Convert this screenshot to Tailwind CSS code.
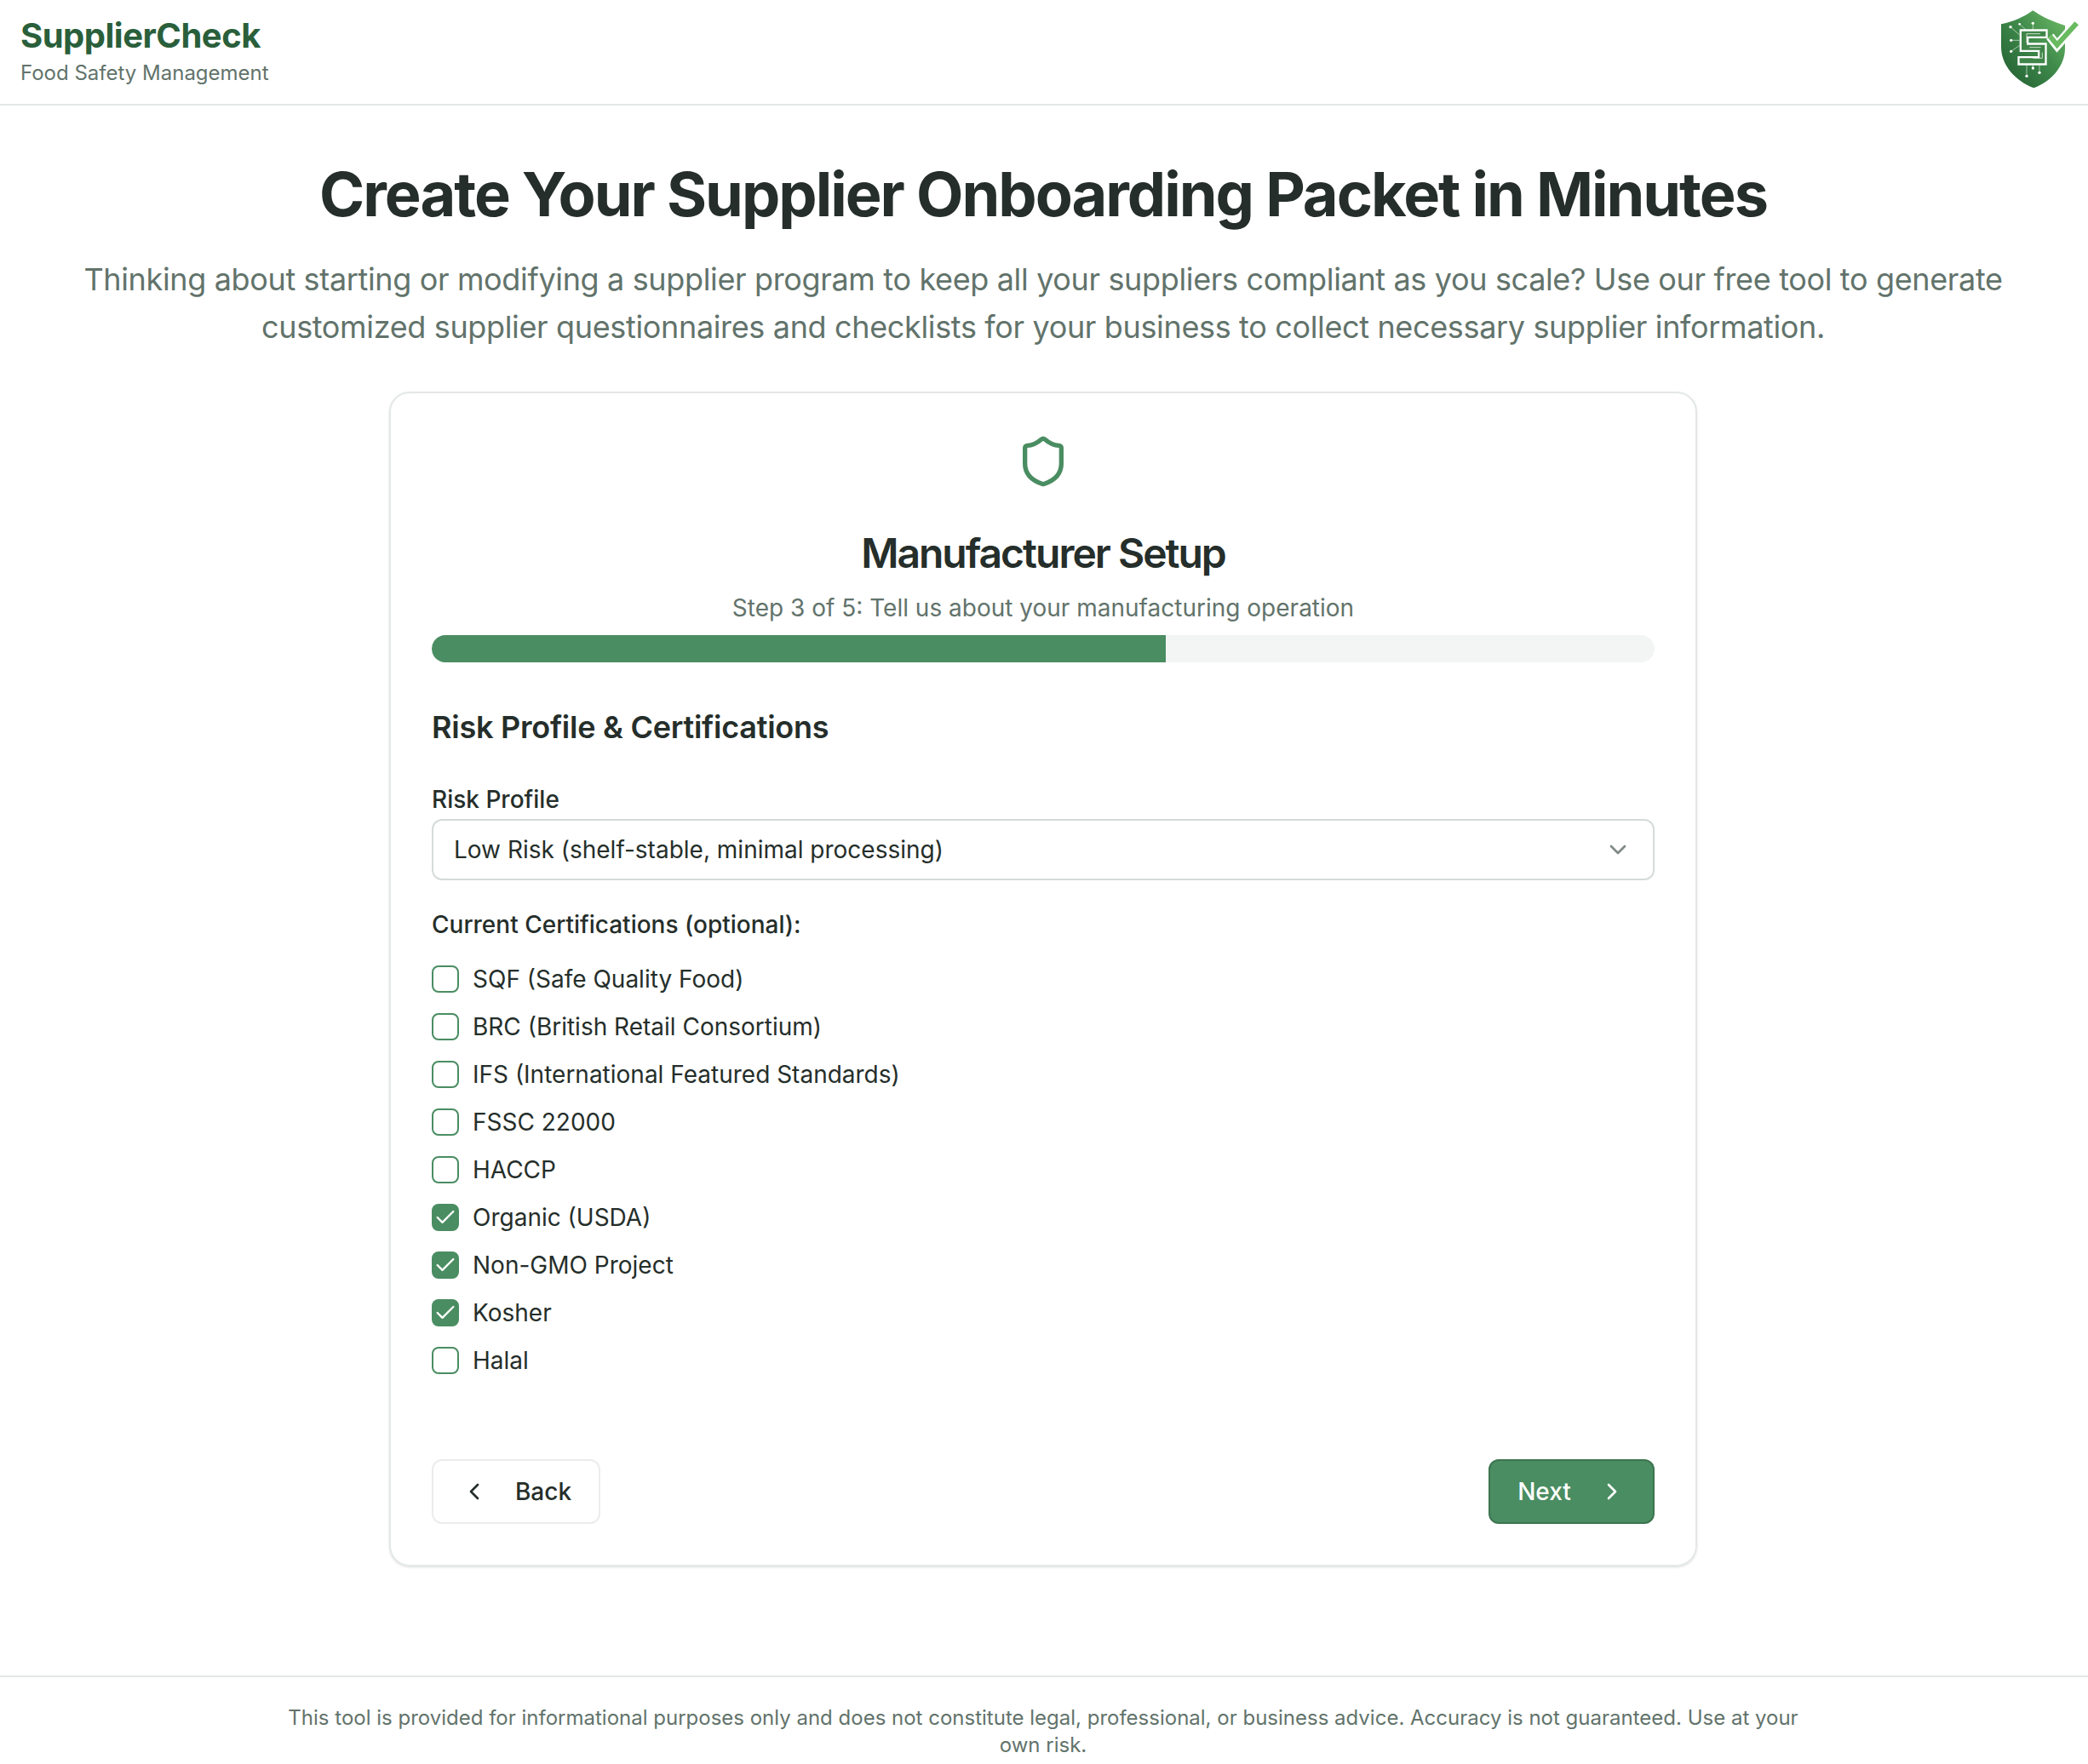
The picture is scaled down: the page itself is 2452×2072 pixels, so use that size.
<!DOCTYPE html>
<html lang="en">
<head>
    <meta charset="UTF-8">
    <meta name="viewport" content="width=device-width, initial-scale=1.0">
    <title>SupplierCheck</title>
    <script src="https://cdn.jsdelivr.net/npm/@tailwindcss/browser@4"></script>
</head>
<body class="bg-white font-['Inter',sans-serif] text-[#252e2a]">
    <!-- Header -->
    <header class="h-[124px] border-b-2 border-[#e3e8e6] pl-6 pr-2 flex items-center justify-between">
        <div class="pb-[6px]">
            <div class="text-[40px] leading-[56px] font-bold tracking-[-0.5px] text-[#2a5f3b]">SupplierCheck</div>
            <div class="text-[24px] leading-[32px] text-[#62736b]">Food Safety Management</div>
        </div>
        <svg class="w-[100px] h-[100px]" viewBox="132 33 300 300" fill="none">
            <defs>
                <linearGradient id="shieldFill" x1="0" y1="1" x2="1" y2="0">
                    <stop offset="0" stop-color="#1f5a30"/>
                    <stop offset="0.55" stop-color="#3f8a4b"/>
                    <stop offset="1" stop-color="#70bd66"/>
                </linearGradient>
            </defs>
            <path d="M262 37C230 60 190 78 150 85L150 165C150 230 200 285 265 310C330 285 375 230 375 170L375 90C335 78 295 60 262 37Z" fill="url(#shieldFill)"/>
            <!-- circuit traces -->
            <g stroke="#dfeee0" stroke-width="2">
                <path d="M183 95L215 123M215 85L245 112M262 82V105M185 142H215M185 181L215 160M240 268V228M262 240V228M285 256V228"/>
            </g>
            <g fill="#ffffff">
                <circle cx="183" cy="95" r="5"/><circle cx="215" cy="85" r="4"/><circle cx="262" cy="82" r="5"/>
                <circle cx="185" cy="142" r="5"/><circle cx="185" cy="181" r="5"/><circle cx="240" cy="268" r="5"/>
                <circle cx="262" cy="240" r="5"/><circle cx="285" cy="256" r="5"/>
            </g>
            <!-- S mark -->
            <path d="M298 119H231V167H295V214H224" stroke="#ffffff" stroke-width="32" stroke-linecap="square"/>
            <path d="M298 119H231V167H295V214H224" stroke="#3f8549" stroke-width="18" stroke-linecap="square"/>
            <path d="M288 119H240V150M250 167H290M295 185V205H262" stroke="#e6f2e6" stroke-width="2.5"/>
            <!-- check -->
            <path d="M322 128L347 160L410 88" stroke="#ffffff" stroke-width="32"/>
            <path d="M322 128L347 158L416 82" stroke="#69ba60" stroke-width="18"/>
        </svg>
    </header>

    <main class="flex flex-col items-center pr-[2px]">
        <h1 class="mt-[56px] text-[72px] leading-[96px] font-bold tracking-[-2px] text-center">Create Your Supplier Onboarding Packet in Minutes</h1>
        <p class="mt-[24px] w-[2300px] text-[36px] leading-[56px] tracking-[-0.35px] text-center text-[#62736b]">Thinking about starting or modifying a supplier program to keep all your suppliers compliant as you scale? Use our free tool to generate customized supplier questionnaires and checklists for your business to collect necessary supplier information.</p>

        <!-- Wizard card -->
        <section class="mt-[48px] w-[1536px] border-2 border-[#e3e8e6] rounded-3xl shadow-sm p-[48px]">
            <svg class="mx-auto w-[64px] h-[64px] text-[#4a8d62]" viewBox="0 0 24 24" fill="none" stroke="currentColor" stroke-width="2" stroke-linecap="round" stroke-linejoin="round">
                <path d="M20 13c0 5-3.5 7.5-7.66 8.95a1 1 0 0 1-.67-.01C7.5 20.5 4 18 4 13V6a1 1 0 0 1 1-1c2 0 4.5-1.2 6.24-2.72a1.17 1.17 0 0 1 1.52 0C14.51 3.81 17 5 19 5a1 1 0 0 1 1 1z"/>
            </svg>
            <h2 class="mt-[48px] text-[48px] leading-[56px] font-semibold tracking-[-2px] text-center">Manufacturer Setup</h2>
            <p class="mt-[16px] text-[28px] leading-[40px] text-center text-[#62736b]">Step 3 of 5: Tell us about your manufacturing operation</p>

            <div class="mt-[12px] h-[32px] rounded-full bg-[#f3f5f4] overflow-hidden">
                <div class="h-full bg-[#4a8d62]" style="width: 60%"></div>
            </div>

            <h3 class="mt-[48px] text-[36px] leading-[56px] font-semibold tracking-[-0.25px]">Risk Profile &amp; Certifications</h3>

            <label class="block mt-[37px] text-[28px] leading-[40px] font-medium">Risk Profile</label>
            <div class="mt-[3px] h-[72px] border-2 border-[#d5dbd8] rounded-xl pl-[24px] pr-[25px] flex items-center justify-between text-[28px]">
                <span>Low Risk (shelf-stable, minimal processing)</span>
                <svg class="w-[32px] h-[32px] text-[#7f8a85]" viewBox="0 0 24 24" fill="none" stroke="currentColor" stroke-width="2" stroke-linecap="round" stroke-linejoin="round"><path d="m6 9 6 6 6-6"/></svg>
            </div>

            <div class="mt-[32px] text-[28px] leading-[40px] font-medium">Current Certifications (optional):</div>
            <ul class="mt-[24px] flex flex-col gap-[16px] text-[28px] leading-[40px]">
                <li class="flex items-center gap-[16px]"><span class="w-[32px] h-[32px] border-2 border-[#4a8d62] rounded-lg"></span>SQF (Safe Quality Food)</li>
                <li class="flex items-center gap-[16px]"><span class="w-[32px] h-[32px] border-2 border-[#4a8d62] rounded-lg"></span>BRC (British Retail Consortium)</li>
                <li class="flex items-center gap-[16px]"><span class="w-[32px] h-[32px] border-2 border-[#4a8d62] rounded-lg"></span>IFS (International Featured Standards)</li>
                <li class="flex items-center gap-[16px]"><span class="w-[32px] h-[32px] border-2 border-[#4a8d62] rounded-lg"></span>FSSC 22000</li>
                <li class="flex items-center gap-[16px]"><span class="w-[32px] h-[32px] border-2 border-[#4a8d62] rounded-lg"></span>HACCP</li>
                <li class="flex items-center gap-[16px]"><span class="w-[32px] h-[32px] bg-[#4a8d62] rounded-lg flex items-center justify-center"><svg class="w-[28px] h-[28px] text-white" viewBox="0 0 24 24" fill="none" stroke="currentColor" stroke-width="2" stroke-linecap="round" stroke-linejoin="round"><path d="M20 6 9 17l-5-5"/></svg></span>Organic (USDA)</li>
                <li class="flex items-center gap-[16px]"><span class="w-[32px] h-[32px] bg-[#4a8d62] rounded-lg flex items-center justify-center"><svg class="w-[28px] h-[28px] text-white" viewBox="0 0 24 24" fill="none" stroke="currentColor" stroke-width="2" stroke-linecap="round" stroke-linejoin="round"><path d="M20 6 9 17l-5-5"/></svg></span>Non-GMO Project</li>
                <li class="flex items-center gap-[16px]"><span class="w-[32px] h-[32px] bg-[#4a8d62] rounded-lg flex items-center justify-center"><svg class="w-[28px] h-[28px] text-white" viewBox="0 0 24 24" fill="none" stroke="currentColor" stroke-width="2" stroke-linecap="round" stroke-linejoin="round"><path d="M20 6 9 17l-5-5"/></svg></span>Kosher</li>
                <li class="flex items-center gap-[16px]"><span class="w-[32px] h-[32px] border-2 border-[#4a8d62] rounded-lg"></span>Halal</li>
            </ul>

            <div class="mt-[96px] flex justify-between text-[28px] font-medium">
                <button class="w-[198px] h-[76px] border-2 border-[#ececec] rounded-xl flex items-center justify-center gap-[32px]">
                    <svg class="w-[32px] h-[32px]" viewBox="0 0 24 24" fill="none" stroke="currentColor" stroke-width="2" stroke-linecap="round" stroke-linejoin="round"><path d="m15 18-6-6 6-6"/></svg>
                    Back
                </button>
                <button class="w-[195px] h-[76px] border-2 border-[#3d7550] bg-[#4a8d62] text-white rounded-xl flex items-center justify-center gap-[32px]">
                    Next
                    <svg class="w-[32px] h-[32px]" viewBox="0 0 24 24" fill="none" stroke="currentColor" stroke-width="2" stroke-linecap="round" stroke-linejoin="round"><path d="m9 18 6-6-6-6"/></svg>
                </button>
            </div>
        </section>
    </main>

    <footer class="mt-[128px] border-t-2 border-[#e3e8e6] pt-[32px] pr-[2px] flex justify-center">
        <p class="w-[1792px] text-[24px] leading-[32px] text-center text-[#62736b]">This tool is provided for informational purposes only and does not constitute legal, professional, or business advice. Accuracy is not guaranteed. Use at your own risk.</p>
    </footer>
</body>
</html>
